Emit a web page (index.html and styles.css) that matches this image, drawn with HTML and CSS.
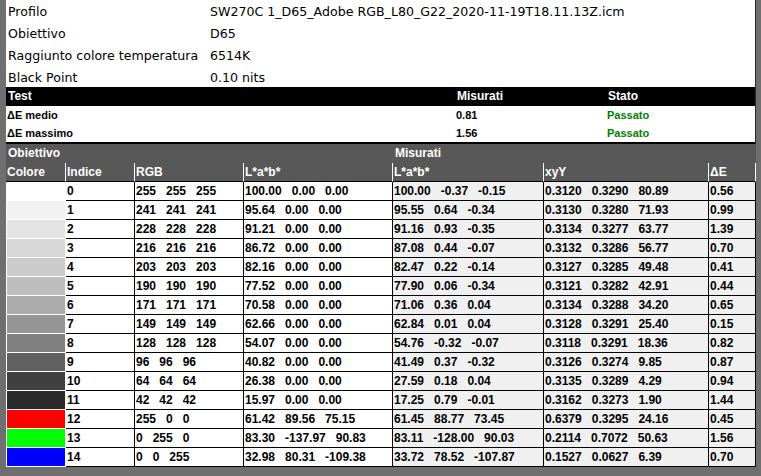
FILE: index.html
```html
<!DOCTYPE html>
<html>
<head>
<meta charset="utf-8">
<link rel="stylesheet" href="styles.css">
</head>
<body>
<div class="page">
  <div class="info">
    <div class="lbl">Profilo</div><div class="val">SW270C 1_D65_Adobe RGB_L80_G22_2020-11-19T18.11.13Z.icm</div>
    <div class="lbl">Obiettivo</div><div class="val">D65</div>
    <div class="lbl">Raggiunto colore temperatura</div><div class="val">6514K</div>
    <div class="lbl">Black Point</div><div class="val">0.10 nits</div>
  </div>
  <div class="test">
    <div class="th">Test</div><div class="th">Misurati</div><div class="th">Stato</div>
    <div class="td">ΔE medio</div><div class="td">0.81</div><div class="td ok">Passato</div>
    <div class="td">ΔE massimo</div><div class="td">1.56</div><div class="td ok">Passato</div>
  </div>
  <div class="grid">
    <div class="band span4">Obiettivo</div><div class="band span3">Misurati</div>
    <div class="hd">Colore</div><div class="hd">Indice</div><div class="hd">RGB</div><div class="hd">L*a*b*</div><div class="hd">L*a*b*</div><div class="hd">xyY</div><div class="hd">ΔE</div>

    <div class="sw" style="background:rgb(255,255,255)"></div><div class="c">0</div><div class="c">255   255   255</div><div class="c">100.00   0.00   0.00</div><div class="c m">100.00   -0.37   -0.15</div><div class="c m">0.3120   0.3290   80.89</div><div class="c m">0.56</div>
    <div class="sw" style="background:rgb(241,241,241)"></div><div class="c">1</div><div class="c">241   241   241</div><div class="c">95.64   0.00   0.00</div><div class="c m">95.55   0.64   -0.34</div><div class="c m">0.3130   0.3280   71.93</div><div class="c m">0.99</div>
    <div class="sw" style="background:rgb(228,228,228)"></div><div class="c">2</div><div class="c">228   228   228</div><div class="c">91.21   0.00   0.00</div><div class="c m">91.16   0.93   -0.35</div><div class="c m">0.3134   0.3277   63.77</div><div class="c m">1.39</div>
    <div class="sw" style="background:rgb(216,216,216)"></div><div class="c">3</div><div class="c">216   216   216</div><div class="c">86.72   0.00   0.00</div><div class="c m">87.08   0.44   -0.07</div><div class="c m">0.3132   0.3286   56.77</div><div class="c m">0.70</div>
    <div class="sw" style="background:rgb(203,203,203)"></div><div class="c">4</div><div class="c">203   203   203</div><div class="c">82.16   0.00   0.00</div><div class="c m">82.47   0.22   -0.14</div><div class="c m">0.3127   0.3285   49.48</div><div class="c m">0.41</div>
    <div class="sw" style="background:rgb(190,190,190)"></div><div class="c">5</div><div class="c">190   190   190</div><div class="c">77.52   0.00   0.00</div><div class="c m">77.90   0.06   -0.34</div><div class="c m">0.3121   0.3282   42.91</div><div class="c m">0.44</div>
    <div class="sw" style="background:rgb(171,171,171)"></div><div class="c">6</div><div class="c">171   171   171</div><div class="c">70.58   0.00   0.00</div><div class="c m">71.06   0.36   0.04</div><div class="c m">0.3134   0.3288   34.20</div><div class="c m">0.65</div>
    <div class="sw" style="background:rgb(149,149,149)"></div><div class="c">7</div><div class="c">149   149   149</div><div class="c">62.66   0.00   0.00</div><div class="c m">62.84   0.01   0.04</div><div class="c m">0.3128   0.3291   25.40</div><div class="c m">0.15</div>
    <div class="sw" style="background:rgb(128,128,128)"></div><div class="c">8</div><div class="c">128   128   128</div><div class="c">54.07   0.00   0.00</div><div class="c m">54.76   -0.32   -0.07</div><div class="c m">0.3118   0.3291   18.36</div><div class="c m">0.82</div>
    <div class="sw" style="background:rgb(96,96,96)"></div><div class="c">9</div><div class="c">96   96   96</div><div class="c">40.82   0.00   0.00</div><div class="c m">41.49   0.37   -0.32</div><div class="c m">0.3126   0.3274   9.85</div><div class="c m">0.87</div>
    <div class="sw" style="background:rgb(64,64,64)"></div><div class="c">10</div><div class="c">64   64   64</div><div class="c">26.38   0.00   0.00</div><div class="c m">27.59   0.18   0.04</div><div class="c m">0.3135   0.3289   4.29</div><div class="c m">0.94</div>
    <div class="sw" style="background:rgb(42,42,42)"></div><div class="c">11</div><div class="c">42   42   42</div><div class="c">15.97   0.00   0.00</div><div class="c m">17.25   0.79   -0.01</div><div class="c m">0.3162   0.3273   1.90</div><div class="c m">1.44</div>
    <div class="sw" style="background:rgb(255,0,0)"></div><div class="c">12</div><div class="c">255   0   0</div><div class="c">61.42   89.56   75.15</div><div class="c m">61.45   88.77   73.45</div><div class="c m">0.6379   0.3295   24.16</div><div class="c m">0.45</div>
    <div class="sw" style="background:rgb(0,255,0)"></div><div class="c">13</div><div class="c">0   255   0</div><div class="c">83.30   -137.97   90.83</div><div class="c m">83.11   -128.00   90.03</div><div class="c m">0.2114   0.7072   50.63</div><div class="c m">1.56</div>
    <div class="sw" style="background:rgb(0,0,255)"></div><div class="c">14</div><div class="c">0   0   255</div><div class="c">32.98   80.31   -109.38</div><div class="c m">33.72   78.52   -107.87</div><div class="c m">0.1527   0.0627   6.39</div><div class="c m">0.70</div>
  </div>
</div>
</body>
</html>
```
FILE: styles.css
```css
* { box-sizing: border-box; }
html, body { margin: 0; padding: 0; }
body {
  background: #6f6f6f;
  width: 761px;
  height: 476px;
  overflow: hidden;
}
.page {
  margin-left: 6px;
  width: 750px;
  background: #ffffff;
  border-right: 1px solid #2a2a2a;
}
.info {
  display: grid;
  grid-template-columns: 204px 1fr;
  grid-template-rows: repeat(4, 21.75px);
  font-family: "DejaVu Sans", Verdana, sans-serif;
  font-size: 12.6px;
  color: #000;
  align-items: center;
  padding-top: 1px;
}
.info .lbl { padding-left: 2px; }
.test {
  display: grid;
  grid-template-columns: 449px 151px 1fr;
  grid-template-rows: 19px 18px 18px;
  font-family: "Liberation Sans", Arial, sans-serif;
  font-weight: bold;
  border-bottom: 2px solid #000;
  align-items: center;
  margin-top: -1px;
}
.test .th {
  background: #000;
  color: #fff;
  font-size: 12px;
  height: 19px;
  line-height: 19px;
  padding-left: 2px;
}
.test .td {
  font-size: 11px;
  padding-left: 1px;
  color: #000;
}
.test .ok { color: #008000; }
.grid {
  display: grid;
  grid-template-columns: 60px 69px 109px 149px 151px 165px 47px;
  grid-auto-rows: 19px;
  font-family: "Liberation Sans", Arial, sans-serif;
  font-weight: bold;
  font-size: 12px;
}
.band {
  background: #585858;
  color: #fff;
  line-height: 19px;
  height: 20px;
  border-bottom: 1px solid #fff;
  padding-left: 2px;
}
.grid .span4 { grid-column: span 4; }
.grid .span3 { grid-column: span 3; }
.hd {
  background: #585858;
  color: #fff;
  line-height: 18px;
  border-right: 1px solid #fff;
  border-bottom: 1px solid #000;
  padding-left: 1px;
}
.sw {
  border-left: 1px solid #fff;
  border-right: 1px solid #fff;
  border-bottom: 1px solid #fff;
}
.c {
  white-space: pre;
  color: #000;
  line-height: 18px;
  padding-left: 1px;
  border-right: 1px solid #000;
  border-bottom: 1px solid #000;
  background: #fff;
}
.c.m { background: #f0f0f0; }
```
